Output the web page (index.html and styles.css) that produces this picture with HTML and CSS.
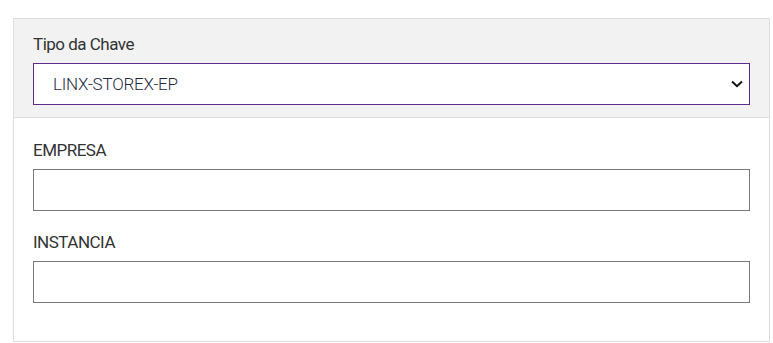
FILE: index.html
```html
<!DOCTYPE html>
<html lang="pt">
<head>
<meta charset="utf-8">
<link rel="stylesheet" href="styles.css">
</head>
<body>
  <div class="card">
    <div class="card-head">
      <label class="label" for="tipo">Tipo da Chave</label>
      <div class="select-wrap">
        <select id="tipo" class="select">
          <option>LINX-STOREX-EP</option>
        </select>
        <svg class="chevron" width="12" height="8" viewBox="0 0 12 8" aria-hidden="true">
          <path d="M1 1.5 L6 6.2 L11 1.5" fill="none" stroke="#111" stroke-width="2"/>
        </svg>
      </div>
    </div>
    <div class="card-body">
      <div class="field">
        <label class="label" for="empresa">EMPRESA</label>
        <input id="empresa" class="input" type="text">
      </div>
      <div class="field">
        <label class="label" for="instancia">INSTANCIA</label>
        <input id="instancia" class="input" type="text">
      </div>
    </div>
  </div>
</body>
</html>
```

FILE: styles.css
```css
* { box-sizing: border-box; }

body {
  margin: 0;
  padding: 18px 4px 0 13px;
  background: #ffffff;
  font-family: Roboto, "Liberation Sans", sans-serif;
}

.card {
  width: 757px;
  border: 1px solid #dddddd;
  background: #ffffff;
}

.card-head {
  background: #f2f2f2;
  border-bottom: 1px solid #dddddd;
  padding: 15px 19px 12px;
}

.label {
  display: block;
  font-size: 17px;
  line-height: 20px;
  color: #333333;
  letter-spacing: -0.5px;
  margin-bottom: 9px;
}

.select-wrap {
  position: relative;
}

.select {
  display: block;
  width: 100%;
  height: 42px;
  appearance: none;
  -webkit-appearance: none;
  border: 1px solid #5b2d91;
  border-radius: 0;
  background: #ffffff;
  padding: 0 40px 0 19px;
  font-family: inherit;
  font-size: 17px;
  font-weight: 300;
  letter-spacing: -0.2px;
  color: #1f2a44;
  outline: none;
}

.chevron {
  position: absolute;
  right: 7px;
  top: 17px;
  pointer-events: none;
}

.card-body {
  padding: 22px 19px 38px;
  display: flex;
  flex-direction: column;
  gap: 21px;
}

.input {
  display: block;
  width: 100%;
  height: 42px;
  border: 1px solid #777777;
  border-radius: 0;
  background: #ffffff;
  padding: 0 10px;
  font-family: inherit;
  font-size: 17px;
  outline: none;
}
```
